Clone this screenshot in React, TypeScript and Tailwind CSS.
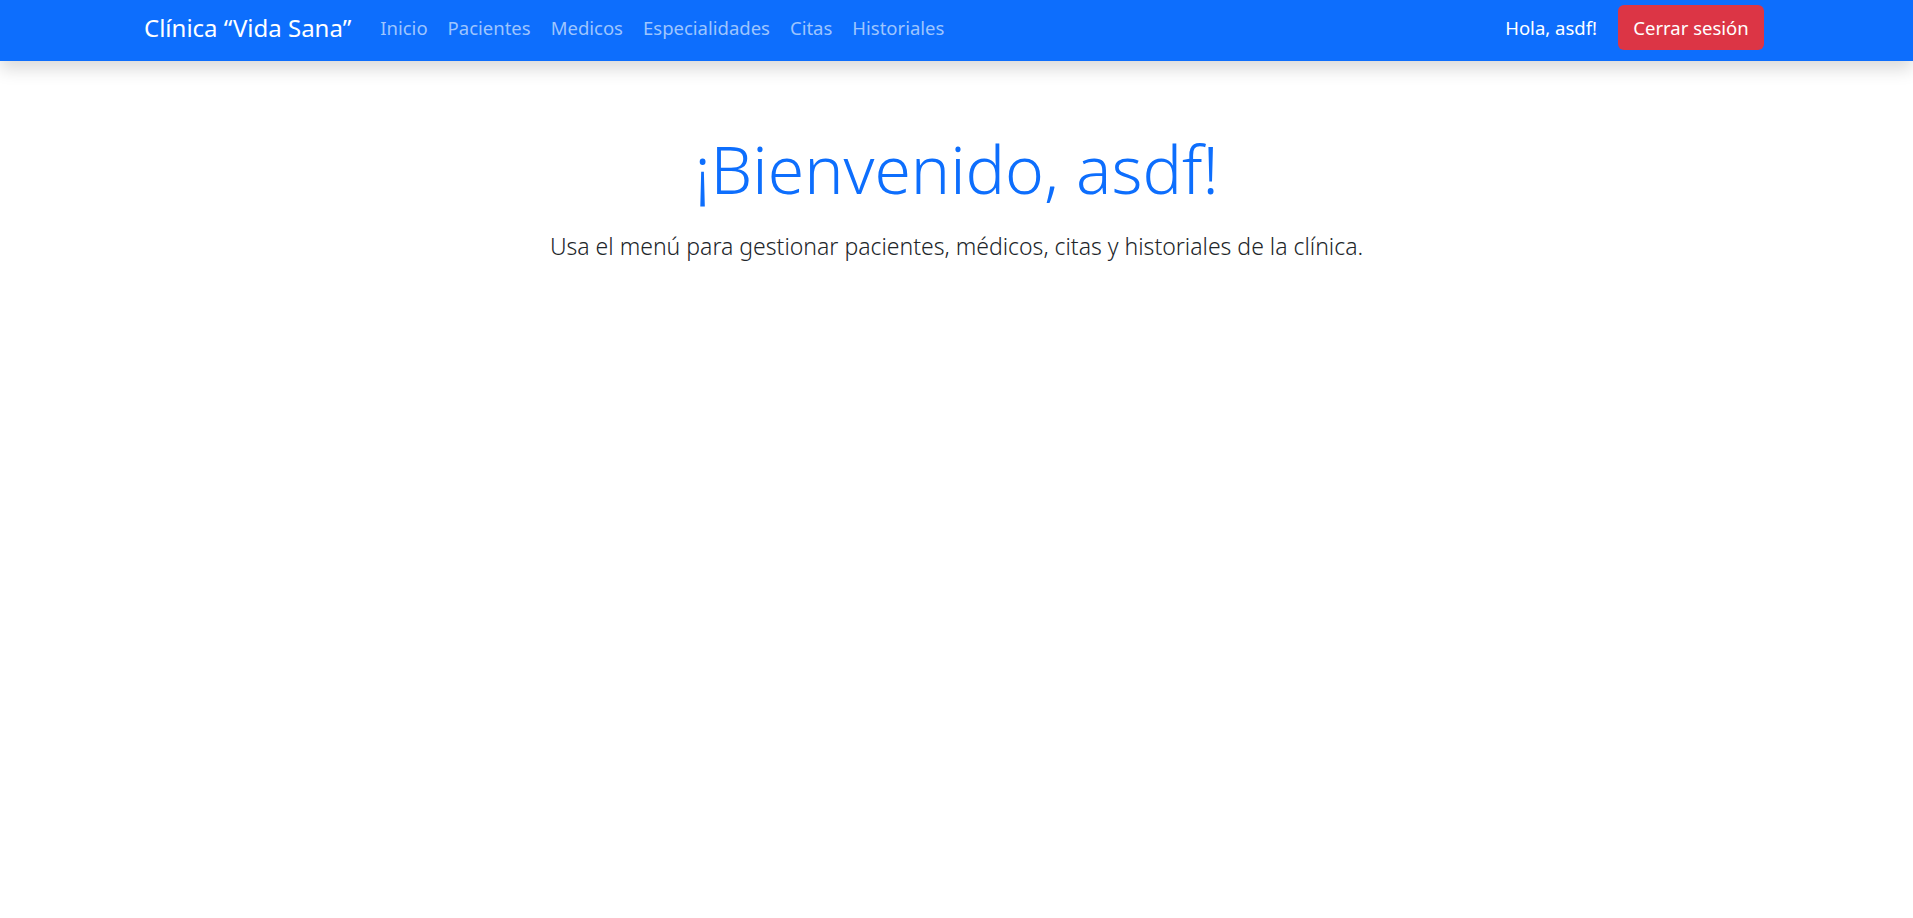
export default function App() {
  const links = ["Inicio", "Pacientes", "Medicos", "Especialidades", "Citas", "Historiales"];
  return (
    <div className="min-h-screen bg-white font-['Segoe_UI','Noto_Sans',sans-serif]">
      <nav className="relative z-10 h-[61px] bg-[#0d6efd] shadow-[0_8px_16px_rgba(0,0,0,0.15)]">
        <div className="flex h-full items-center pb-[6px] pl-[144px] pr-[149px]">
          <a className="mr-[19px] text-[24px] text-white">Clínica “Vida Sana”</a>
          <ul className="flex items-center">
            {links.map((l) => (
              <li key={l}>
                <a className="px-[10px] text-[18.5px] text-[#9ec5fe]">{l}</a>
              </li>
            ))}
          </ul>
          <div className="ml-auto flex items-center gap-[21px]">
            <span className="text-[18.5px] text-white">Hola, asdf!</span>
            <button className="h-[45px] w-[146px] rounded-[6px] bg-[#dc3545] text-[18.5px] text-white">
              Cerrar sesión
            </button>
          </div>
        </div>
      </nav>
      <main className="flex flex-col items-center pt-[68px]">
        <h1 className="text-[66px] font-light leading-[1.2] text-[#0d6efd]">¡Bienvenido, asdf!</h1>
        <p className="mt-[21px] text-[23px] font-light text-[#212529]">
          Usa el menú para gestionar pacientes, médicos, citas y historiales de la clínica.
        </p>
      </main>
    </div>
  );
}
